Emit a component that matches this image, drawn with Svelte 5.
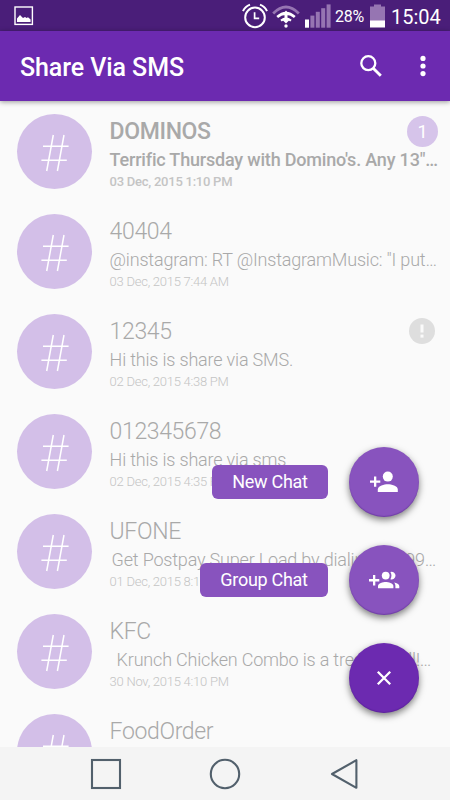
<script lang="ts">
  type Chat = {
    name: string;
    text: string;
    date: string;
    indent?: number;
    unread?: number;
    failed?: boolean;
  };

  const chats: Chat[] = [
    { name: 'DOMINOS', text: `Terrific Thursday with Domino's. Any 13"…`, date: '03 Dec, 2015 1:10 PM', unread: 1 },
    { name: '40404', text: '@instagram: RT @InstagramMusic: "I put…', date: '03 Dec, 2015 7:44 AM' },
    { name: '12345', text: 'Hi this is share via SMS.', date: '02 Dec, 2015 4:38 PM', failed: true },
    { name: '012345678', text: 'Hi this is share via sms', date: '02 Dec, 2015 4:35 PM' },
    { name: 'UFONE', text: 'Get Postpay Super Load by dialing *5099…', date: '01 Dec, 2015 8:12 PM', indent: 2 },
    { name: 'KFC', text: 'Krunch Chicken Combo is a treat for all!…', date: '30 Nov, 2015 4:10 PM', indent: 7 },
    { name: 'FoodOrder', text: '', date: '' },
  ];
</script>

<div class="phone">
  <div class="status">
    <svg class="photo" width="20" height="20" viewBox="0 0 20 20">
      <rect x="1" y="1" width="17.4" height="17.4" fill="none" stroke="#fff" stroke-width="1.4" />
      <path d="M3 16v-3.4l3-3.5 3 3 2-1 1.6 1 1.4-.8 2.6 2.3V16z" fill="#fff" />
    </svg>
    <svg class="alarm" width="26" height="26" viewBox="0 0 26 26" fill="none" stroke="#fff">
      <circle cx="13" cy="14.4" r="9.8" stroke-width="2" />
      <path d="M12.6 9.2v6.2h4.6" stroke-width="1.7" />
      <path d="M1 8.2Q3 3.6 8 1.6M25 8.2Q23 3.6 18 1.6" stroke-width="2" />
    </svg>
    <svg class="wifi" width="28" height="24" viewBox="0 0 28 24" fill="none">
      <path d="M1.2 9.4Q14 -3.4 26.8 9.4" stroke="#9675b2" stroke-width="2.8" />
      <path d="M5.2 13Q14 5.2 22.8 13" stroke="#fff" stroke-width="2.6" />
      <path d="M9 16.6Q14 12.6 19 16.6" stroke="#fff" stroke-width="2.2" />
      <path d="M14 6.6l4 4.6h-8zM14 19.6l4-4h-8z" fill="#fff" />
      <path d="M14 11v6" stroke="#fff" stroke-width="3" />
      <circle cx="14" cy="22" r="1.7" fill="#fff" />
    </svg>
    <svg class="signal" width="26" height="24" viewBox="0 0 26 24" fill="#9675b2">
      <rect x="0" y="15.5" width="4" height="8.2" fill="#fff" />
      <rect x="5.4" y="11.6" width="4" height="12.1" />
      <rect x="10.8" y="7.8" width="4" height="15.9" />
      <rect x="16.2" y="4.2" width="4" height="19.5" />
      <rect x="21.6" y="0.4" width="4" height="23.3" />
    </svg>
    <span class="percent">28%</span>
    <svg class="battery" width="15" height="24" viewBox="0 0 15 24">
      <path d="M0 2.4h4V.4h7v2h4V17H0z" fill="#9675b2" />
      <rect y="16.5" width="15" height="7" fill="#fff" />
    </svg>
    <span class="clock">15:04</span>
  </div>

  <header>
    <h1>Share Via SMS</h1>
    <button aria-label="Search">
      <svg width="24" height="24" viewBox="0 0 24 24" fill="none" stroke="#fff">
        <circle cx="9.3" cy="9.2" r="7" stroke-width="2.3" />
        <path d="M14.2 14.2l7.6 7.5" stroke-width="2.9" />
      </svg>
    </button>
    <button class="more" aria-label="More">
      <svg width="6" height="22" viewBox="0 0 6 22" fill="#fff">
        <circle cx="3" cy="3.4" r="2.6" />
        <circle cx="3" cy="11" r="2.6" />
        <circle cx="3" cy="18.6" r="2.6" />
      </svg>
    </button>
  </header>

  <ul class="chats">
    {#each chats as chat}
      <li class:unread={chat.unread}>
        <div class="avatar">
          <svg width="28" height="38" viewBox="0 0 28 38" fill="none" stroke="#fff" stroke-width="1.5">
            <path d="M12.3 1L5.7 37M23 1L16.4 37M2 12.2h25.6M.4 26.3h25.4" />
          </svg>
        </div>
        <div class="body">
          <div class="top">
            <span class="name">{chat.name}</span>
            {#if chat.unread}
              <span class="count">{chat.unread}</span>
            {/if}
            {#if chat.failed}
              <span class="failed">
                <svg width="4" height="14" viewBox="0 0 4 14" fill="#fafafa">
                  <rect x=".5" y=".5" width="3" height="8" />
                  <rect x=".5" y="10.6" width="3" height="3" />
                </svg>
              </span>
            {/if}
          </div>
          <p class="text" style="padding-left: {chat.indent ?? 0}px">{chat.text}</p>
          <p class="date">{chat.date}</p>
        </div>
      </li>
    {/each}
  </ul>

  <nav>
    <svg width="32" height="32" viewBox="0 0 32 32"><rect x="2" y="2" width="28" height="28" /></svg>
    <svg width="32" height="32" viewBox="0 0 32 32"><circle cx="16" cy="16" r="14.2" /></svg>
    <svg width="32" height="32" viewBox="0 0 32 32"><path d="M28.4 2.2v27.6L4 16z" stroke-linejoin="round" /></svg>
  </nav>

  <div class="menu">
    <div class="action">
      <span class="label">New Chat</span>
      <button class="fab" aria-label="New Chat">
        <svg width="28" height="22" viewBox="0 0 28 22" fill="#fff">
          <path d="M4 5.4h2.3v4h4v2.3h-4v4H4v-4H0V9.4h4z" />
          <circle cx="17.8" cy="5.6" r="5" />
          <path d="M7.8 21v-2.6c0-3.4 6.5-5.1 10-5.1s10 1.7 10 5.1V21z" />
        </svg>
      </button>
    </div>
    <div class="action">
      <span class="label">Group Chat</span>
      <button class="fab" aria-label="Group Chat">
        <svg width="31" height="18" viewBox="0 0 31 18" fill="#fff">
          <path d="M4 4.1h2.3v4h4v2.3h-4v4H4v-4H0V8.1h4z" />
          <circle cx="16.7" cy="4.6" r="3.9" />
          <path d="M9 17.2v-2.1c0-2.6 5.1-4 7.7-4s7.7 1.4 7.7 4v2.1z" />
          <path d="M21.4.9a3.9 3.9 0 1 1 0 7.4c1.4-2.2 1.4-5.2 0-7.4z" />
          <path d="M25 11.5c2.7.5 5.3 1.7 5.3 3.6v2.1h-3.9v-2.1c0-1.5-.4-2.6-1.4-3.6z" />
        </svg>
      </button>
    </div>
    <div class="action">
      <button class="fab close" aria-label="Close">
        <svg width="16" height="16" viewBox="0 0 16 16" fill="none" stroke="#fff" stroke-width="2.3">
          <path d="M1.8 1.8l12.4 12.4M14.2 1.8L1.8 14.2" />
        </svg>
      </button>
    </div>
  </div>
</div>

<style>
  :global(body) { margin: 0; }
  .phone {
    position: relative;
    display: flex;
    flex-direction: column;
    width: 450px;
    height: 800px;
    overflow: hidden;
    background: #fafafa;
    font-family: Roboto, sans-serif;
  }
  svg { display: block; flex: none; }
  button {
    all: unset;
    cursor: pointer;
    flex: none;
  }
  p, h1, ul { margin: 0; padding: 0; }

  .status {
    display: flex;
    align-items: center;
    flex: none;
    box-sizing: border-box;
    height: 31px;
    padding: 0 9px 0 14px;
    background: #4a1e79;
    color: #fff;
    white-space: nowrap;
  }
  .alarm { margin-left: auto; }
  .wifi { margin-left: 4px; }
  .signal { margin-left: 5px; }
  .percent {
    width: 29px;
    margin-left: 4px;
    padding-top: 2px;
    font-size: 16px;
    letter-spacing: -0.2px;
  }
  .battery { margin-left: 6px; }
  .clock {
    width: 50px;
    margin-left: 6px;
    padding-top: 3px;
    font-size: 20px;
    line-height: 31px;
  }

  header {
    position: relative;
    display: flex;
    align-items: center;
    flex: none;
    box-sizing: border-box;
    height: 70px;
    padding: 0 24.5px 0 20px;
    background: #6c2ab0;
    box-shadow: 0 1px 5px rgba(0, 0, 0, 0.4);
  }
  h1 {
    flex: 1;
    padding-top: 3px;
    color: #fff;
    font-size: 25px;
    font-weight: 500;
    line-height: 67px;
    letter-spacing: -0.08px;
  }
  .more { margin-left: 37px; }

  .chats {
    flex: 1;
    overflow: hidden;
    list-style: none;
  }
  li {
    display: flex;
    box-sizing: border-box;
    height: 100px;
    padding: 12.5px 12px 0 17px;
    color: #a9a9a9;
    font-weight: 300;
  }
  .avatar {
    display: flex;
    align-items: center;
    justify-content: center;
    flex: none;
    box-sizing: border-box;
    width: 75px;
    height: 75px;
    padding-top: 3px;
    border-radius: 50%;
    background: #d3bfe8;
  }
  .body {
    flex: 1;
    min-width: 0;
    padding: 2.5px 0 0 17.6px;
  }
  .top {
    display: flex;
    align-items: center;
    justify-content: space-between;
    height: 30px;
  }
  .name {
    font-size: 23px;
    letter-spacing: -0.36px;
  }
  .count, .failed {
    display: flex;
    align-items: center;
    justify-content: center;
    border-radius: 50%;
  }
  .count {
    width: 31px;
    height: 31px;
    background: #d6c4ea;
    color: #fff;
    font-size: 18px;
    font-weight: 400;
  }
  .failed {
    width: 26px;
    height: 26px;
    margin-right: 3px;
    background: #dedede;
  }
  .text {
    font-size: 18px;
    line-height: 28px;
    letter-spacing: -0.19px;
    white-space: nowrap;
  }
  .date {
    color: #c4c4c4;
    font-size: 13px;
    line-height: 15px;
    letter-spacing: -0.25px;
  }
  .unread { font-weight: 500; }

  nav {
    display: flex;
    align-items: center;
    justify-content: center;
    gap: 87px;
    flex: none;
    height: 53px;
    background: #f4f4f4;
  }
  nav svg {
    fill: none;
    stroke: #52606c;
    stroke-width: 2.1;
  }

  .menu {
    position: absolute;
    right: 31px;
    bottom: 87.4px;
    display: flex;
    flex-direction: column;
    align-items: flex-end;
    gap: 27.6px;
  }
  .action {
    display: flex;
    align-items: center;
    gap: 21.4px;
  }
  .label {
    padding: 0 20px;
    border-radius: 6px;
    background: #8853be;
    color: #fff;
    font-size: 18px;
    line-height: 34px;
    letter-spacing: -0.3px;
    white-space: nowrap;
  }
  .fab {
    display: flex;
    align-items: center;
    justify-content: center;
    width: 70px;
    height: 70px;
    border-radius: 50%;
    background: #8853be;
    box-shadow: 0 3px 7px rgba(0, 0, 0, 0.5), inset 0 -1px 1px rgba(70, 20, 130, 0.35);
  }
  .close { background: #6c2ab0; }
</style>
